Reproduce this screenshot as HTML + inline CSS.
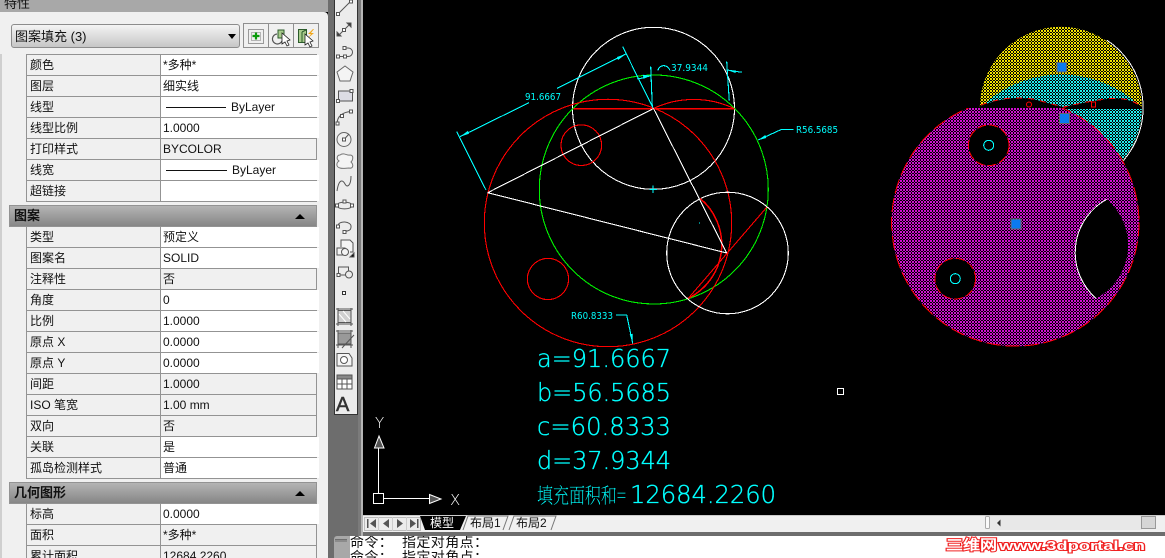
<!DOCTYPE html>
<html lang="zh"><head><meta charset="utf-8"><style>
html,body{margin:0;padding:0;background:#000}
#p{position:relative;width:1165px;height:558px;overflow:hidden;background:#000;font:12px "Liberation Sans","WenQuanYi Zen Hei","Noto Sans CJK SC",sans-serif;color:#111}
#p div{position:absolute;box-sizing:border-box}
.r{left:26px;width:291px;height:22px;background:#f0f0f0;border:1px solid #939393;line-height:21px;white-space:nowrap}
.r b{font-weight:normal;position:absolute;left:3px;top:0}
.r i{font-style:normal;position:absolute;left:133px;top:0;bottom:0;width:156px;border-left:1px solid #939393;padding-left:2px}
.r i.w{background:#fff}
.r u{position:absolute;left:5px;top:10px;width:60px;height:1px;background:#111}
.r em{font-style:normal;position:absolute;top:0}
.h{left:9px;width:308px;height:22px;background:linear-gradient(#b4b4b4,#868686);border:1px solid #939393;font-weight:bold;font-size:13px;line-height:20px;padding-left:4px}
.h:after{content:"";position:absolute;right:11px;top:8px;border:5px solid transparent;border-top:0;border-bottom:5px solid #000}
svg{position:absolute;left:0;top:0}
</style></head><body><div id="p">
<div style="left:0;top:0;width:328px;height:12px;background:#a8a8a8;overflow:hidden"><span style="position:absolute;left:4px;top:-7px;font-size:13px">特性</span></div>
<div style="left:0;top:12px;width:328px;height:546px;background:#f0f0f0;border-top-right-radius:4px"></div>
<div style="left:0;top:54px;width:2px;height:504px;background:#cfcfcf"></div>
<div style="left:328px;top:0;width:6px;height:558px;background:#6d6d6d"></div>
<div style="left:334px;top:0;width:24px;height:415px;background:#ececec;border-left:1px solid #333;border-right:1px solid #333;border-bottom:1px solid #333"></div>
<div style="left:334px;top:415px;width:29px;height:143px;background:#6d6d6d"></div>
<div style="left:358px;top:0;width:3px;height:536px;background:#7b7b7b"></div>
<div style="left:361px;top:0;width:2px;height:536px;background:#b5b5b5"></div>

<div style="left:11px;top:24px;width:229px;height:24px;background:linear-gradient(#f4f4f4,#c6c6c6);border:1px solid #8c8c8c;border-radius:3px;font-size:13px;line-height:23px;padding-left:3px">图案填充 (3)</div>
<div style="left:228px;top:34px;border:4px solid transparent;border-top:5px solid #000;border-bottom:0;width:0;height:0;box-sizing:content-box"></div>
<div style="left:243px;top:23px;width:76px;height:25px;background:#f0f0f0;border:1px solid #8f8f8f"></div>
<div style="left:268px;top:23px;width:1px;height:25px;background:#8f8f8f"></div>
<div style="left:293px;top:23px;width:1px;height:25px;background:#8f8f8f"></div>

<div class="r" style="top:54px"><b>颜色</b><i class="w">*多种*</i></div>
<div class="r" style="top:75px"><b>图层</b><i class="w">细实线</i></div>
<div class="r" style="top:96px"><b>线型</b><i class="w"><u></u><em style="left:70px">ByLayer</em></i></div>
<div class="r" style="top:117px"><b>线型比例</b><i class="w">1.0000</i></div>
<div class="r" style="top:138px"><b>打印样式</b><i>BYCOLOR</i></div>
<div class="r" style="top:159px"><b>线宽</b><i class="w"><u style="width:61px"></u><em style="left:71px">ByLayer</em></i></div>
<div class="r" style="top:180px"><b>超链接</b><i class="w"></i></div>
<div class="h" style="top:205px">图案</div>
<div class="r" style="top:226px"><b>类型</b><i class="w">预定义</i></div>
<div class="r" style="top:247px"><b>图案名</b><i class="w">SOLID</i></div>
<div class="r" style="top:268px"><b>注释性</b><i>否</i></div>
<div class="r" style="top:289px"><b>角度</b><i class="w">0</i></div>
<div class="r" style="top:310px"><b>比例</b><i class="w">1.0000</i></div>
<div class="r" style="top:331px"><b>原点 X</b><i class="w">0.0000</i></div>
<div class="r" style="top:352px"><b>原点 Y</b><i class="w">0.0000</i></div>
<div class="r" style="top:373px"><b>间距</b><i>1.0000</i></div>
<div class="r" style="top:394px"><b>ISO 笔宽</b><i>1.00 mm</i></div>
<div class="r" style="top:415px"><b>双向</b><i>否</i></div>
<div class="r" style="top:436px"><b>关联</b><i class="w">是</i></div>
<div class="r" style="top:457px"><b>孤岛检测样式</b><i class="w">普通</i></div>
<div class="h" style="top:482px">几何图形</div>
<div class="r" style="top:503px"><b>标高</b><i class="w">0.0000</i></div>
<div class="r" style="top:524px"><b>面积</b><i>*多种*</i></div>
<div class="r" style="top:545px"><b>累计面积</b><i>12684.2260</i></div>

<div style="left:363px;top:515px;width:802px;height:17px;background:#f0f0f0;border-top:1px solid #ccc"></div>
<div style="left:363px;top:532px;width:802px;height:4px;background:#6d6d6d"></div>
<div style="left:334px;top:536px;width:16px;height:22px;background:#a8a8a8;border-radius:3px 0 0 0"></div>
<div style="left:350px;top:536px;width:815px;height:22px;background:#fff;font-family:'Liberation Mono','WenQuanYi Zen Hei',monospace;font-size:14px;line-height:15px;letter-spacing:.4px;white-space:nowrap;overflow:hidden"><span style="position:absolute;left:0;top:1px">命令： 指定对角点：</span><span style="position:absolute;left:0;top:16px">命令： 指定对角点：</span></div>

<svg width="1165" height="558" viewBox="0 0 1165 558" font-family="'Liberation Sans','WenQuanYi Zen Hei',sans-serif">
<defs>
<pattern id="m" width="3" height="3" patternUnits="userSpaceOnUse"><rect width="3" height="3" fill="#000"/><rect width="2" height="2" fill="#d010d0"/><rect x="2" y="2" width="1" height="1" fill="#d010d0"/></pattern>
<pattern id="y" width="3" height="3" patternUnits="userSpaceOnUse"><rect width="3" height="3" fill="#000"/><rect width="2" height="2" fill="#f0e000"/><rect x="2" y="2" width="1" height="1" fill="#f0e000"/></pattern>
<pattern id="c" width="3" height="3" patternUnits="userSpaceOnUse"><rect width="3" height="3" fill="#000"/><rect width="2" height="2" fill="#20ecec"/><rect x="2" y="2" width="1" height="1" fill="#20ecec"/></pattern>
<clipPath id="top"><circle cx="1060.8" cy="107.8" r="81"/></clipPath>
<clipPath id="below"><rect x="880" y="108" width="285" height="260"/></clipPath>
</defs>

<!-- property buttons -->
<g>
<rect x="248.500" y="29.500" width="15" height="14" fill="none" stroke="#444" stroke-dasharray="1 1"/>
<rect x="251.500" y="32.500" width="9" height="8" fill="none" stroke="#777" stroke-dasharray="1 1"/>
<path d="M256 32.500v7M252.500 36h7" stroke="#0a9a0a" stroke-width="2.200"/>
<path d="M277 34a5 5 0 1 0 5 7" fill="none" stroke="#555" stroke-width="1.200"/>
<rect x="278" y="30" width="6" height="8" fill="#a8cc8c" stroke="#2c5c2c"/>
<path d="M282 33l0 11 3-2 2 4 2-1-2-4 3-1z" fill="#fff" stroke="#222" stroke-width=".8"/>
<rect x="298.500" y="29.500" width="8" height="13" fill="#a8cc8c" stroke="#2c5c2c"/>
<path d="M302 32v10M302 32l4-2" stroke="#2c5c2c" fill="none"/>
<path d="M313 29l-5 5h3l-3 4 6-5h-3l3-4z" fill="#f2a81c"/>
<path d="M305 34l0 11 3-2 2 4 2-1-2-4 3-1z" fill="#fff" stroke="#222" stroke-width=".8"/>
</g>

<!-- draw toolbar -->
<g fill="none" stroke="#555" stroke-width="1">
<path d="M338 14L350 2"/><rect x="336.500" y="12.500" width="3" height="3" fill="#fff"/><rect x="349.500" y="0" width="3" height="3" fill="#fff"/>
<path d="M338 36L351 23"/><path d="M337 36v-4l4 4zM351 23v4l-4-4z" fill="#333"/><rect x="342.500" y="28.500" width="3" height="3" fill="#fff"/>
<path d="M338 56.500H348C354 56.500 354 48 348 48H345"/><rect x="336.500" y="55" width="3" height="3" fill="#fff"/><rect x="343.500" y="55" width="3" height="3" fill="#fff"/><rect x="343" y="46.500" width="3" height="3" fill="#fff"/>
<path d="M345 66L353 72 350 81H340L337 72Z" fill="#f4f4f4" stroke="#666"/>
<rect x="338.500" y="91" width="14" height="10" fill="#dcdce4"/><rect x="350" y="89.500" width="3" height="3" fill="#fff"/><rect x="336.500" y="99.500" width="3" height="3" fill="#fff"/>
<path d="M337 124C337 116 343 112 351 111.500"/><rect x="336" y="122" width="3" height="3" fill="#fff"/><rect x="340.500" y="114.500" width="3" height="3" fill="#fff"/><rect x="349.500" y="110" width="3" height="3" fill="#fff"/>
<circle cx="344" cy="139.500" r="7" stroke="#666" fill="#f0f0f0"/><path d="M344 139.500L349 134"/><rect x="342.500" y="138" width="3" height="3" fill="#fff"/>
<path d="M340 155C344 152 347 156 350 155 354 155 353 160 351 162 354 165 353 169 349 168 346 168 343 169 340 168 336 167 336 163 339 161 336 159 337 155 340 155Z" fill="#f4f4f4" stroke="#777"/>
<path d="M337 191C339 178 343 180 345 184S351 186 351 176"/>
<path d="M337 205.500C337 201 352 201 352 205.500S337 210 337 205.500Z"/><rect x="335.500" y="204" width="3" height="3" fill="#fff"/><rect x="350.500" y="204" width="3" height="3" fill="#fff"/><rect x="343" y="200" width="3" height="3" fill="#fff"/>
<path d="M338 226C338 220 352 221 351 227 351 231 347 231 344 231.500"/><rect x="336.500" y="225" width="3" height="3" fill="#fff"/><rect x="343" y="230.500" width="3" height="3" fill="#fff"/>
<path d="M341 247v-7h9l3 3v9h-3" fill="#f4f4f4"/><rect x="337" y="248" width="8" height="7" fill="#f4f4f4"/><circle cx="345" cy="252" r="3.500" fill="#f4f4f4"/><path d="M350 257l4-4v4z" fill="#000"/>
<rect x="338.500" y="267" width="10" height="8"/><circle cx="349" cy="274.500" r="3.500" fill="#ececec"/><rect x="337" y="273.500" width="3" height="3" fill="#fff"/>
<rect x="342.500" y="291.500" width="3" height="3" fill="#fff" stroke="#333"/>
<rect x="338" y="310.500" width="13" height="12" fill="#d0d0d0" stroke="#555"/><path d="M336 309h17M336 324h17M338 308v18M351 308v18"/><path d="M339 314l7 8M343 311l7 8" stroke="#fff"/>
<rect x="338" y="333" width="13" height="11" fill="#999" stroke="#555"/><path d="M336 331h17M336 345h17M338 330v18M351 330v18"/><path d="M342 348l12-13"/>
<path d="M337 353.500H349L352 358V366H337Z" fill="#f4f4f4"/><circle cx="344" cy="360" r="3.500" fill="#fff"/>
<rect x="337" y="375" width="15" height="14" fill="#fff"/><rect x="337" y="375" width="15" height="4" fill="#888"/><path d="M337 384h15M342 379v10M347 379v10"/>
</g>
<text x="336" y="411" font-size="20" fill="#333" stroke="#333" stroke-width=".5">A</text>

<!-- left drawing -->
<g shape-rendering="crispEdges" fill="none" stroke-width="1.100">
<circle cx="653.500" cy="108.300" r="81" stroke="#fff"/>
<circle cx="653.800" cy="189.500" r="114.500" stroke="#00f000"/>
<circle cx="608" cy="223" r="123.700" stroke="#ff0000"/>
<circle cx="727.500" cy="253" r="60.800" stroke="#fff"/>
<circle cx="581.300" cy="145.200" r="20.300" stroke="#ff0000"/>
<circle cx="548" cy="279" r="20.600" stroke="#ff0000"/>
<path d="M573.300 108.500H734.300" stroke="#ff0000" stroke-width="1.500"/>
<path d="M653.500 108.500A94 94 0 0 1 734 108.500" stroke="#ff0000"/>
<path d="M700 198.300A60 60 0 0 1 688.300 298.300" stroke="#ff0000" stroke-width="1.500"/>
<path d="M688.300 298.300L766.700 207.300" stroke="#ff0000"/>
<path d="M487.700 192.700L653.500 108.500M487.700 192.700L726.700 253M653.500 108.500L726.700 253" stroke="#fff"/>
<g stroke="#00ffff">
<path d="M456.700 131.700L486 190M622.700 46.700L653 108M460 136.700L529 102.700M557 88.300L626 54"/>
<path d="M650.700 66.700L652.300 106.700M726.700 61.700L729.300 100.700M637.300 79.300L650.700 75.700M727 70L741.700 72.300"/>
<path d="M758.300 140L781.700 129.300H793.300M616 315H626.700L632.700 343.300"/>
<path d="M653 185.500v7.500M649.500 189.300h7.500"/>
<path d="M699 223h1"/>
<path d="M658 70.500C659 64 668 64 670 70.500"/>
</g>
</g>
<g fill="#00ffff">
<path d="M460 136.700l8-6 1 3z"/><path d="M626 54l-8 6-1-3z"/>
<path d="M650.700 75.700l-8-1 1 4z"/><path d="M727 70l9 .5-.5 2.500z"/>
<path d="M758.300 140l7-5 1 3z"/><path d="M632.700 343.300l-3-9 3-.5z"/>
</g>
<g fill="#00ffff" font-size="10" font-family="'DejaVu Sans',sans-serif">
<text x="525" y="100" textLength="36" lengthAdjust="spacingAndGlyphs">91.6667</text>
<text x="671" y="71" textLength="37" lengthAdjust="spacingAndGlyphs">37.9344</text>
<text x="796" y="133" textLength="42" lengthAdjust="spacingAndGlyphs">R56.5685</text>
<text x="571" y="319" textLength="42" lengthAdjust="spacingAndGlyphs">R60.8333</text>
</g>

<!-- right hatch drawing -->
<circle cx="1060.800" cy="107.800" r="81" fill="url(#y)"/>
<circle cx="1061" cy="189" r="114.500" fill="url(#c)" clip-path="url(#top)"/>
<path d="M980 106Q1013 93 1041 101T1065 106.700Q1085 102 1106 99T1142 106.700V109H980Z" fill="#000"/>
<path d="M981 105Q1013 93 1041 101T1065 106.700Q1085 102 1106 99T1142 106.700" fill="none" stroke="#ff0000" stroke-dasharray="6 6" shape-rendering="crispEdges"/>
<circle cx="1029" cy="104.500" r="2.500" fill="none" stroke="#ff0000"/>
<rect x="1091.500" y="102" width="4" height="5" fill="none" stroke="#ff0000" shape-rendering="crispEdges"/>
<path d="M1106.700 40A81 81 0 0 1 1123.300 160.700" fill="none" stroke="#fff" shape-rendering="crispEdges"/>
<g clip-path="url(#below)">
<circle cx="1015.300" cy="222.500" r="123.700" fill="url(#m)"/>
<circle cx="1015.300" cy="222.500" r="123.700" fill="none" stroke="#ff0000" stroke-dasharray="14 5" shape-rendering="crispEdges"/>
</g>
<circle cx="988.700" cy="145.300" r="20.300" fill="#000" stroke="#ff0000" stroke-dasharray="9 3" shape-rendering="crispEdges"/>
<circle cx="955.300" cy="278.700" r="20.300" fill="#000" stroke="#ff0000" stroke-dasharray="9 3" shape-rendering="crispEdges"/>
<circle cx="988.700" cy="145.300" r="5" fill="none" stroke="#00ffff" shape-rendering="crispEdges"/>
<circle cx="955.300" cy="278.700" r="5" fill="none" stroke="#00ffff" shape-rendering="crispEdges"/>
<path d="M1106.700 199.300A60.800 60.800 0 0 0 1096 298.300A60 60 0 0 0 1106.700 199.300Z" fill="#000"/>
<path d="M1106.700 199.300A60.800 60.800 0 0 0 1096 298.300" fill="none" stroke="#fff" shape-rendering="crispEdges"/>
<g fill="#0a7af0" stroke="#666">
<rect x="1057" y="62.500" width="9.500" height="9.500"/>
<rect x="1059.500" y="113.500" width="10" height="10"/>
<rect x="1011" y="219" width="10" height="10"/>
</g>

<!-- cad text -->
<g fill="#00ffff" stroke="#00ffff" stroke-width=".35" font-size="25" font-family="'DejaVu Sans',sans-serif" font-weight="200">
<text x="537" y="367" textLength="134" lengthAdjust="spacingAndGlyphs">a=91.6667</text>
<text x="537" y="401" textLength="134" lengthAdjust="spacingAndGlyphs">b=56.5685</text>
<text x="537" y="435" textLength="134" lengthAdjust="spacingAndGlyphs">c=60.8333</text>
<text x="537" y="469" textLength="134" lengthAdjust="spacingAndGlyphs">d=37.9344</text>
<text x="537" y="503" font-size="21" stroke="none" font-family="'Noto Serif CJK SC',serif" font-weight="200" textLength="89" lengthAdjust="spacingAndGlyphs">填充面积和=</text>
<text x="630" y="503" textLength="146" lengthAdjust="spacingAndGlyphs">12684.2260</text>
</g>

<rect x="837.500" y="388.500" width="6" height="6" fill="none" stroke="#fff" shape-rendering="crispEdges"/>

<!-- UCS -->
<g fill="none" stroke="#fff" shape-rendering="crispEdges">
<rect x="373.500" y="493.500" width="10" height="10"/>
<path d="M378.500 493V448M384 498.500H429"/>
</g>
<path d="M379 436L374.500 448H384Z" fill="#555" stroke="#fff"/>
<path d="M429.500 494.500L441 499 429.500 503.500Z" fill="#555" stroke="#fff"/>
<g fill="#fff" font-family="'DejaVu Sans',sans-serif" font-weight="200" font-size="15">
<text x="375" y="428">Y</text><text x="450" y="505">X</text>
</g>

<!-- tabs -->
<g fill="none" stroke="#777" shape-rendering="crispEdges">
<rect x="364.500" y="517.500" width="56" height="13" stroke="#bbb" fill="#ececec"/>
<path d="M378.500 517v14M392.500 517v14M406.500 517v14" stroke="#ccc"/>
</g>
<g fill="#555">
<path d="M367 519h1.500v9H367zM376 519v9l-6-4.500z"/><path d="M389 519v9l-6-4.500z"/><path d="M397 519v9l6-4.500z"/><path d="M410 519v9l6-4.500zM417 519h1.500v9H417z"/>
</g>
<path d="M420 516H466L460 530H425Z" fill="#000"/>
<text x="430" y="527" font-size="12" fill="#fff">模型</text>
<path d="M463 530L468 516H508L503 530M509 530L514 516H556L551 530" fill="none" stroke="#777"/>
<text x="470" y="527" font-size="12" fill="#111">布局1</text>
<text x="516" y="527" font-size="12" fill="#111">布局2</text>
<rect x="985.500" y="516.500" width="4" height="12" rx="1" fill="#fafafa" stroke="#aaa"/>
<rect x="990" y="516" width="152" height="14" fill="#e8e8e8"/>
<path d="M997 523l3.500-3.500v7z" fill="#333"/>
<rect x="1141.500" y="516.500" width="14" height="12" fill="#d6d6d6" stroke="#999"/>

<!-- command header dots -->
<path d="M335.500 539.500H347M335.500 541H347" stroke="#333" stroke-dasharray="1 1" fill="none"/>

<!-- watermark -->
<g fill="#fff" stroke="#f02020" stroke-width="2" paint-order="stroke" font-weight="bold">
<text x="946" y="550" font-size="14" textLength="51" lengthAdjust="spacingAndGlyphs">三维网</text>
<text x="999" y="550" font-size="13" textLength="146" lengthAdjust="spacingAndGlyphs">www.3dportal.cn</text>
</g>
</svg>
</div></body></html>
